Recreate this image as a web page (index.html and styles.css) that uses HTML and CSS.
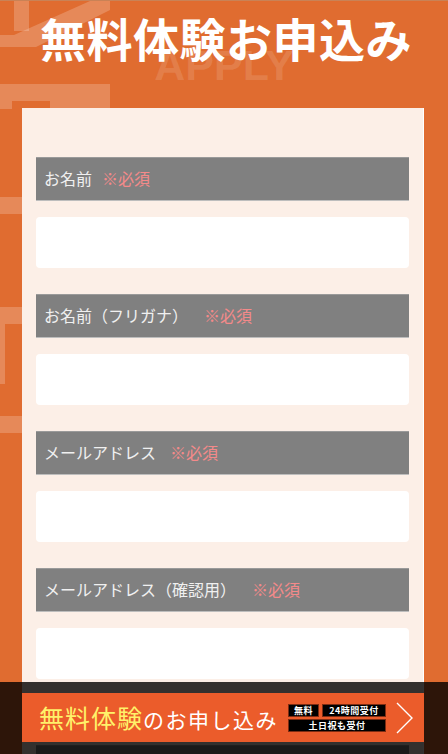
FILE: index.html
```html
<!DOCTYPE html>
<html lang="ja">
<head>
<meta charset="utf-8">
<title>無料体験お申込み</title>
<link rel="stylesheet" href="styles.css">
</head>
<body>
<svg class="deco" width="120" height="440" viewBox="0 0 120 440" aria-hidden="true">
  <rect x="14" y="0" width="15" height="30"/>
  <polygon points="70,0 110,0 110,9 36,46 0,46 0,34 14,34 90,0"/>
  <rect x="0" y="83" width="110" height="17"/>
  <rect x="0" y="100" width="12" height="8"/>
  <rect x="50" y="100" width="60" height="8"/>
  <rect x="0" y="196" width="22" height="17"/>
  <rect x="0" y="306" width="22" height="17"/>
  <rect x="0" y="323" width="5" height="60"/>
  <rect x="0" y="415" width="22" height="17"/>
</svg>
<header class="hero">
  <span class="hero-bg">APPLY</span>
  <h1 class="hero-title">無料体験お申込み</h1>
</header>
<main class="card">
  <div class="field">
    <div class="label">お名前<span class="req">※必須</span></div>
    <div class="input"></div>
  </div>
  <div class="field">
    <div class="label">お名前（フリガナ）<span class="req req-wide">※必須</span></div>
    <div class="input"></div>
  </div>
  <div class="field">
    <div class="label">メールアドレス<span class="req req-mid">※必須</span></div>
    <div class="input"></div>
  </div>
  <div class="field">
    <div class="label">メールアドレス（確認用）<span class="req req-wide">※必須</span></div>
    <div class="input"></div>
  </div>
  <div class="field field-next">
    <div class="label">電話番号<span class="req">※必須</span></div>
    <div class="input"></div>
  </div>
</main>
<footer class="cta-bar">
  <a class="cta" href="#">
    <span class="cta-text"><span class="cta-hl">無料体験</span>のお申し込み</span>
    <span class="badges">
      <span class="badge b-free">無料</span>
      <span class="badge b-24">24時間受付</span>
      <span class="badge b-week">土日祝も受付</span>
    </span>
    <svg class="chev" width="18" height="32" viewBox="0 0 18 32" aria-hidden="true">
      <polyline points="1,1 16,16 1,31" fill="none" stroke="#fff" stroke-width="1.4"/>
    </svg>
  </a>
</footer>
</body>
</html>
```
FILE: styles.css
```css
* { box-sizing: border-box; }
html, body { margin: 0; padding: 0; }
body {
  background: #e06c30;
  border-top: 1px solid #c98256;
  font-family: "Noto Sans CJK JP", "Noto Sans", sans-serif;
  position: relative;
  min-height: 1000px;
}
.deco {
  position: absolute;
  left: 0;
  top: 0;
  fill: rgba(255, 255, 255, 0.2);
  z-index: 0;
}
.hero {
  position: relative;
  z-index: 1;
  height: 107px;
  padding-top: 8px;
}
.hero-bg {
  position: absolute;
  left: 0;
  right: 0;
  top: 43px;
  text-align: center;
  font-family: "Liberation Sans", Arial, sans-serif;
  font-weight: 700;
  font-size: 43px;
  line-height: 43px;
  color: rgba(255, 255, 255, 0.13);
}
.hero-title {
  position: relative;
  margin: 0;
  text-align: center;
  color: #fff;
  font-size: 46px;
  line-height: 56px;
  font-weight: 700;
  letter-spacing: 0.5px;
  padding-left: 4px;
}
.card {
  position: relative;
  z-index: 1;
  margin-left: 22px;
  width: 402px;
  background: #fcefe7;
  border-right: 1px solid #fff;
  padding: 49px 14px 0 14px;
}
.field { margin-bottom: 26px; }
.field-next { margin-top: 66px; }
.label {
  height: 44px;
  background: #808080;
  border-top: 1px solid #9a9a9a;
  border-bottom: 1px solid #bdbdbd;
  color: #f0f0f0;
  font-size: 16px;
  line-height: 41px;
  padding-left: 8px;
}
.req {
  color: #f48a8a;
  margin-left: 10px;
}
.req-mid { margin-left: 14px; }
.req-wide { margin-left: 16px; }
.input {
  margin-top: 16px;
  height: 51px;
  background: #fff;
  border-radius: 4px;
}
.cta-bar {
  position: fixed;
  left: 0;
  right: 0;
  bottom: 0;
  height: 72px;
  background: rgba(0, 0, 0, 0.8);
  z-index: 5;
  padding-top: 11px;
}
.cta {
  display: flex;
  align-items: center;
  margin-left: 22px;
  width: 402px;
  height: 49px;
  background: #eb5c2b;
  text-decoration: none;
  padding-left: 17px;
}
.cta-text {
  color: #fff;
  font-size: 21px;
  letter-spacing: 1.5px;
  line-height: 1;
  white-space: nowrap;
}
.cta-hl {
  color: #fff26a;
  font-size: 25px;
  letter-spacing: 1px;
}
.badges {
  display: grid;
  grid-template-columns: 31px 64px;
  gap: 2px 3px;
  margin-left: 10px;
}
.badge {
  background: #000;
  border: 1px solid #7d2c12;
  color: #fff;
  font-size: 9px;
  font-weight: 700;
  height: 13px;
  line-height: 11px;
  text-align: center;
  letter-spacing: 0.5px;
}
.b-week { grid-column: 1 / 3; }
.chev {
  margin-left: 10px;
  display: block;
}
```
